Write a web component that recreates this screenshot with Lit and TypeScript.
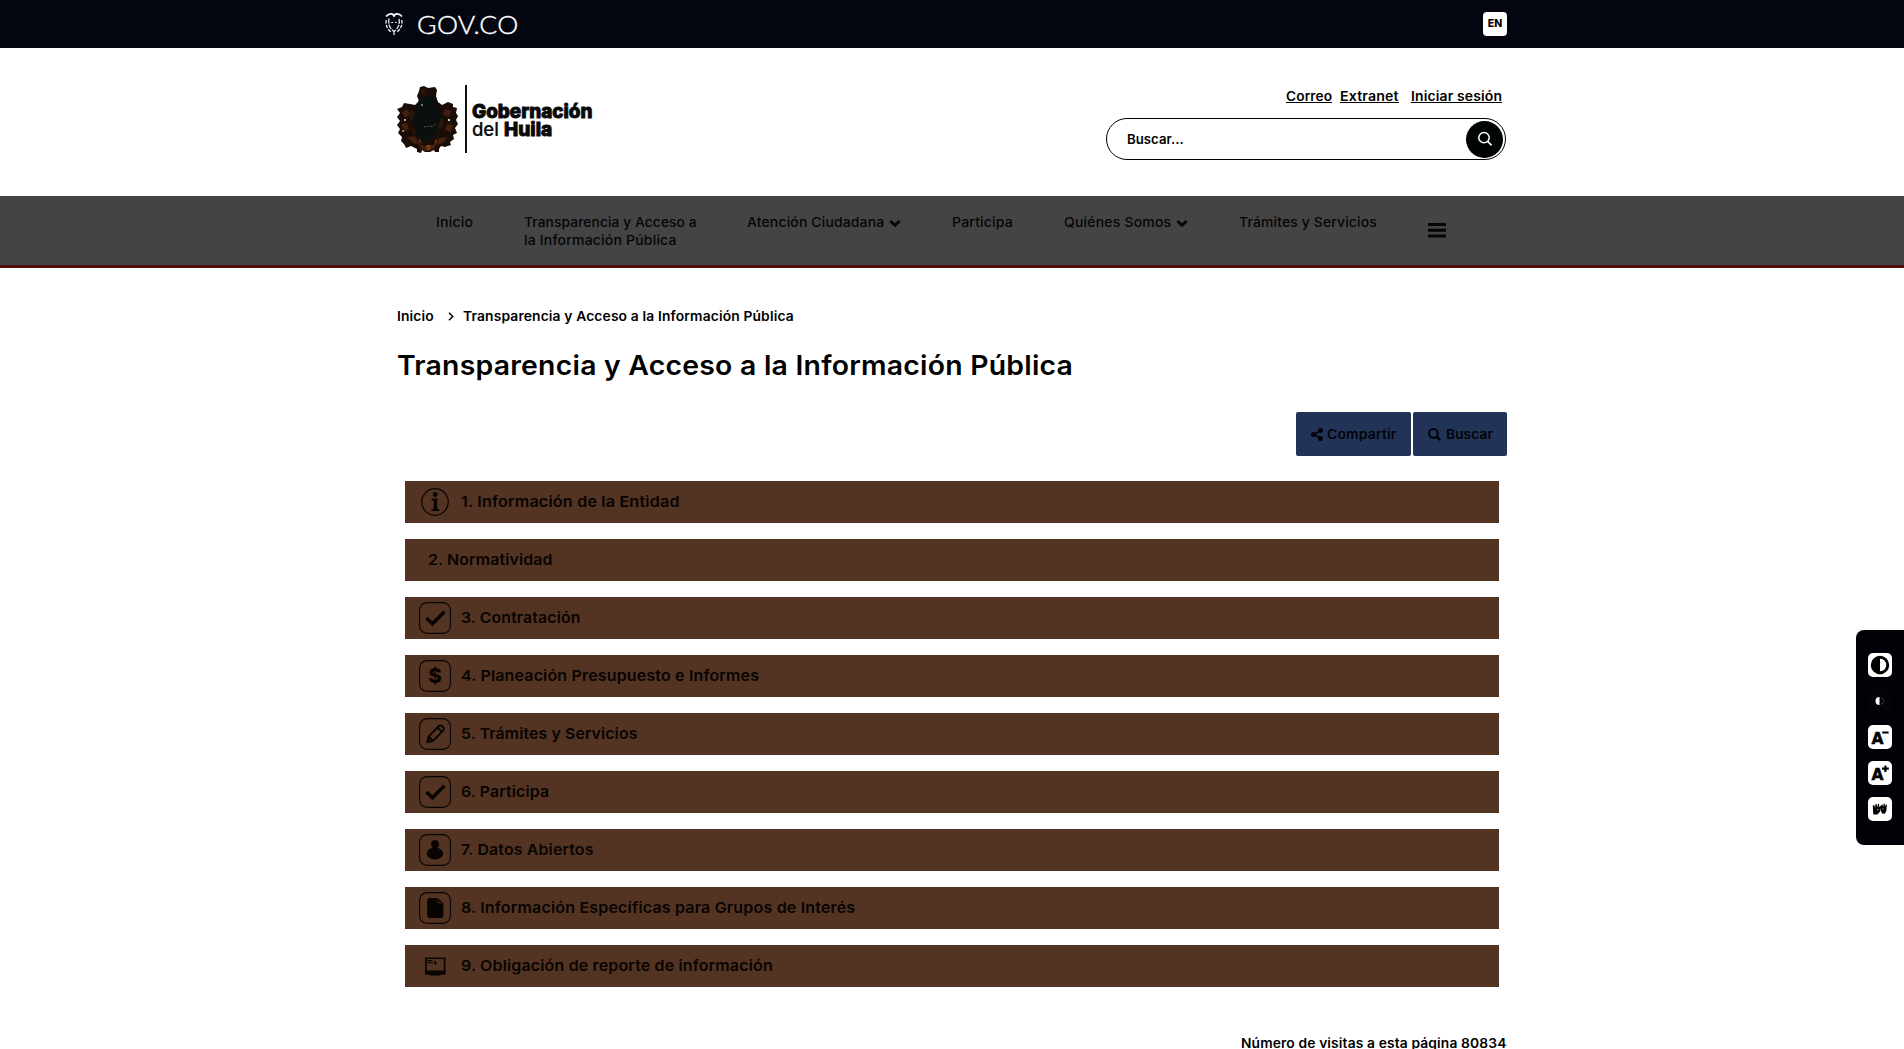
import { LitElement, html, svg, css, nothing } from "lit";
import { customElement, property } from "lit/decorators.js";

/* Single line of text, widened to a measure: mostly by glyph width, the rest by tracking. */
@customElement("fit-text")
class FitText extends LitElement {
  @property() text = "";
  @property({ type: Number }) measure = 0;

  static styles = css`
    :host { display: block; white-space: nowrap; }
    .run { display: inline-block; transform-origin: 0 50%; vertical-align: top; }
  `;

  updated() {
    const run = this.renderRoot.querySelector(".run") as HTMLElement;
    run.style.letterSpacing = "0px";
    const natural = run.offsetWidth;
    const scale = 1 + (this.measure / natural - 1) * 0.75;
    run.style.letterSpacing = `${(this.measure / scale - natural) / this.text.length}px`;
    run.style.transform = `scaleX(${scale})`;
    this.style.width = `${this.measure}px`;
  }

  render() {
    return html`<span class="run">${this.text}</span>`;
  }
}

const chevron = html`<svg class="chev" viewBox="0 0 12 9" width="12" height="9"><path d="M1.4 2 6 6.3 10.6 2" fill="none" stroke="currentColor" stroke-width="2.7" /></svg>`;

const glyphs: Record<string, unknown> = {
  info: svg`<circle cx="16" cy="16" r="13.3" fill="none" stroke="currentColor" stroke-width="1.2"/>
    <circle cx="16.2" cy="8.5" r="2.4"/><path d="M12.6 12.6h5.6v10.6h2v1.8h-7.6v-1.8h2v-8.8h-2z"/>`,
  check: svg`<path d="M7.4 16 13.4 21.8 25.4 9.8" fill="none" stroke="currentColor" stroke-width="3.4"/>`,
  dollar: svg`<text x="16" y="23.2" font-family="Inter, sans-serif" font-size="20.5" font-weight="800" text-anchor="middle">$</text>`,
  pencil: svg`<path d="M8.4 24 9.6 18.4 20 8q1.4-1.2 2.8 0l1.6 1.6q1.2 1.4 0 2.8L14 22.8zM9.6 18.4l4.4 4.4M18.6 9.6l4.2 4.2" fill="none" stroke="currentColor" stroke-width="1.8" stroke-linejoin="round"/><path d="M7.4 25 8.8 20 12.6 23.8z"/>`,
  person: svg`<circle cx="16" cy="10.2" r="4"/><rect x="14" y="12" width="4" height="4"/><ellipse cx="16" cy="19.4" rx="8.2" ry="6"/>`,
  file: svg`<path d="M10.2 6H19l5.4 5v13q0 2-2 2H10.2q-2 0-2-2V8q0-2 2-2z"/><path d="M19.2 6.4v4.4h4.8" fill="none" stroke="#53341f" stroke-width=".8"/>`,
  board: svg`<path d="M7 8.2h18.6v15.4H7z" fill="none" stroke="currentColor" stroke-width="1.6"/><path d="M6.4 20.4h20v3.8h-5v1.2H11v-1.2H6.4zM8.4 10h5v1.2h-5zM8.4 12.2h6v1h-6zM15.2 11h1.8v2.4h1v1h-2.6v-1h.4z"/>`,
};

const rows = [
  { text: "1. Información de la Entidad", w: 219, icon: "info" },
  { text: "2. Normatividad", w: 125, icon: "" },
  { text: "3. Contratación", w: 120, icon: "check", box: true },
  { text: "4. Planeación Presupuesto e Informes", w: 298, icon: "dollar", box: true },
  { text: "5. Trámites y Servicios", w: 176, icon: "pencil", box: true },
  { text: "6. Participa", w: 88.5, icon: "check", box: true },
  { text: "7. Datos Abiertos", w: 133, icon: "person", box: true },
  { text: "8. Información Específicas para Grupos de Interés", w: 394, icon: "file", box: true },
  { text: "9. Obligación de reporte de información", w: 312, icon: "board" },
];

@customElement("app-root")
class AppRoot extends LitElement {
  static styles = css`
    :host {
      display: block; position: relative; height: 1049px; overflow: hidden;
      background: #fff; color: #000; font: 600 13px/18px Inter, "Liberation Sans", sans-serif;
    }
    svg { display: block; fill: currentColor; flex: none; }
    a { color: inherit; text-decoration: none; }
    .wrap { box-sizing: border-box; width: 1110px; margin: 0 auto; }
    .gov { height: 48px; background: #03060f; color: #fff; }
    .gov .wrap { display: flex; justify-content: space-between; height: 48px; }
    .govlogo { display: flex; margin-left: -12px; gap: 14px; }
    .govlogo svg { margin-top: 12px; }
    .govname { font: 300 25px/48px Lato, sans-serif; -webkit-text-stroke: .4px #fff; }
    .en {
      width: 24px; height: 24px; margin-top: 12px; border-radius: 4px; background: #fff; color: #000;
      font-size: 10.5px; font-weight: 800; line-height: 23px; display: flex; justify-content: center;
    }
    .head { display: flex; justify-content: space-between; height: 148px; }
    .brand { display: flex; padding-top: 37px; }
    .rule { width: 2px; height: 68px; background: #111; margin: 0 5px 0 7px; }
    .brandname { font: 800 19px/18px Inter, sans-serif; padding-top: 18px; color: #0a0a0a; -webkit-text-stroke: .9px #0a0a0a; }
    .brandline { display: flex; gap: 5px; }
    .thin { font-weight: 500; -webkit-text-stroke: .2px #0a0a0a; }
    .links { display: flex; padding: 39px 5px 0 0; justify-content: flex-end; }
    .link { height: 15px; line-height: 18px; border-bottom: 1px solid #000; }
    .link.b { margin: 0 12px 0 8px; }
    .search {
      box-sizing: border-box; width: 400px; height: 42px; margin: 15px 1px 0 0; border: 1.5px solid #000; border-radius: 21px;
      display: flex; justify-content: space-between; align-items: center; padding: 0 2px 0 20px;
    }
    .go { width: 37px; height: 37px; border-radius: 50%; background: #000503; color: #fff; display: grid; place-items: center; }
    .nav { height: 69px; background: #444; border-bottom: 3px solid #4f0d0a; font-weight: 500; color: #050505; }
    .navgrid { display: grid; grid-template-columns: 88px 223px 205px 112px 175px 189px 18px; padding: 17px 0 0 39px; }
    .item { display: flex; gap: 5px; }
    .chev { margin-top: 6px; }
    .burger { margin-top: 10px; }
    .crumbs { display: flex; padding-top: 39px; height: 18px; }
    .crumbs svg { margin: 5px 9px 0 14px; }
    h1 { margin: 23px 0 0; font: 600 27px/36px Inter, sans-serif; }
    .actions { display: flex; gap: 2px; justify-content: flex-end; margin-top: 28px; }
    .btn { height: 44px; background: #213356; border-radius: 2px; display: flex; align-items: center; color: #010306; }
    .share { width: 100px; padding-left: 15px; gap: 4px; }
    .find { width: 79px; padding-left: 15px; gap: 5px; }
    .rows { display: grid; gap: 16px; padding: 25px 8px 0; }
    .row { height: 42px; background: #533322; color: #070402; display: flex; align-items: center; font-size: 15px; padding-left: 14px; }
    .row.bare { padding-left: 23px; }
    .ico { width: 32px; height: 32px; margin-right: 9.5px; }
    .visits { display: flex; justify-content: flex-end; margin-top: 47px; }
    .tools {
      position: absolute; right: 0; top: 630px; width: 36px; height: 192px; padding: 23px 0 0 12px;
      background: #000208; border-radius: 8px 0 0 8px; display: flex; flex-direction: column; gap: 12px;
    }
    .tool { width: 24px; height: 24px; border-radius: 5px; background: #fff; color: #000; }
    .tool.dark { background: #02040a; color: #fff; }
    .big { font: 700 15.5px "DejaVu Sans", sans-serif; stroke: #000; stroke-width: .5px; }
  `;

  crest() {
    return html`<svg width="61" height="68" viewBox="0 0 61 68">
      <path fill="#1a0c06" d="M22 6 23 2 27 1 31 3 38 2 40 5 39 11 41 17 45 20 51 17 56 19 56 22 60 23 59 28 61 31 59 35 61 39 58 43 60 48 56 50 57 54 53 57 54 60 48 62 44 61 42 64 42 67 38 67 37 65 33 67 28 67 25 65 24 68 20 67 20 64 14 61 9 63 7 59 4 56 5 52 1 48 3 44 0 40 3 36 0 32 3 28 0 24 5 22 7 18 13 19 18 20 22 16 20 11z"/>
      <g fill="#43200e"><path d="M5 27l5-3 3 5-5 4zM48 24l7 2-4 6-5-3zM4 39l6-1 2 6-5 3zM50 39l6 1-2 7-6-2zM10 52l8-1 4 7-5 1zM42 53l9-1-5 6-6 2zM20 57q11 9 21-1l-4 8q-7 4-13 0z"/></g>
      <g fill="#2c160c"><path d="M14 25l5 3-2 9-5-5zM43 31l4 5-2 9-5-3zM14 41l5 5-2 6zM23 7l4-4 2 8z"/></g>
      <path fill="#0a0f0f" d="M23 12l14-1 4 12 3 9-5 16-9 9-11-8-3-17z"/>
      <path fill="#7a3c12" d="M29 60l5 0-1 5h-3zM22 53l3 6-3-2zM40 53l-3 6 3-2z"/>
      <path fill="none" stroke="#52686b" stroke-width=".8" stroke-dasharray="2 1" d="M27 42l6-1 2 1 4-3"/>
      <g fill="#fff"><circle cx="8" cy="35" r=".9"/><circle cx="52" cy="35" r="1.1"/><circle cx="25" cy="20" r=".8"/><circle cx="6" cy="46" r=".8"/></g>
    </svg>`;
  }

  row(r: (typeof rows)[number]) {
    return html`<a class="row ${r.icon ? "" : "bare"}">
      ${r.icon
        ? html`<svg class="ico" viewBox="0 0 32 32">
            ${r.box ? svg`<rect x=".6" y=".6" width="30.8" height="30.8" rx="7.5" fill="none" stroke="currentColor" stroke-width="1.1"/>` : nothing}
            ${glyphs[r.icon]}
          </svg>`
        : nothing}
      <fit-text text=${r.text} measure=${r.w}></fit-text>
    </a>`;
  }

  render() {
    return html`
      <div class="gov"><div class="wrap">
        <div class="govlogo">
          <svg width="18" height="25" viewBox="0 0 18 25">
            <g fill="none" stroke="#fff" stroke-width="1.2">
              <path d="M1 4.5Q4 1 7.5 2L9 4 10.5 2Q14 1 17 4.5" stroke-width="1.7"/>
              <path d="M4 6.5Q2.5 15 9 19.5 15.5 15 14 6.5" stroke-dasharray="5 1"/>
              <path d="M1.2 8Q0 15 6 20M16.8 8Q18 15 12 20" stroke-dasharray="3.5 1.3"/>
              <path d="M6.3 10.5H8M10 10.5h1.7M9 19v4" />
            </g>
          </svg>
          <fit-text class="govname" text="GOV.CO" measure="102"></fit-text>
        </div>
        <div class="en">EN</div>
      </div></div>

      <div class="wrap head">
        <div class="brand">
          ${this.crest()}
          <div class="rule"></div>
          <div class="brandname">
            <fit-text text="Gobernación" measure="120"></fit-text>
            <div class="brandline"><fit-text class="thin" text="del" measure="27"></fit-text><fit-text text="Huila" measure="48"></fit-text></div>
          </div>
        </div>
        <div>
          <div class="links">
            <a class="link"><fit-text text="Correo" measure="46"></fit-text></a>
            <a class="link b"><fit-text text="Extranet" measure="59"></fit-text></a>
            <a class="link"><fit-text text="Iniciar sesión" measure="91"></fit-text></a>
          </div>
          <div class="search">
            <fit-text text="Buscar..." measure="57"></fit-text>
            <div class="go"><svg width="16" height="16" viewBox="0 0 16 16"><g fill="none" stroke="#fff" stroke-width="1.5"><circle cx="7" cy="6.6" r="5.2"/><path d="M10.6 10.4 14.6 14.4"/></g></svg></div>
          </div>
        </div>
      </div>

      <div class="nav"><div class="wrap navgrid">
        <a class="item"><fit-text text="Inicio" measure="37"></fit-text></a>
        <a><fit-text text="Transparencia y Acceso a" measure="173"></fit-text><fit-text text="la Información Pública" measure="153"></fit-text></a>
        <a class="item"><fit-text text="Atención Ciudadana" measure="137"></fit-text>${chevron}</a>
        <a class="item"><fit-text text="Participa" measure="61"></fit-text></a>
        <a class="item"><fit-text text="Quiénes Somos" measure="107"></fit-text>${chevron}</a>
        <a class="item"><fit-text text="Trámites y Servicios" measure="138"></fit-text></a>
        <svg class="burger" width="18" height="15" viewBox="0 0 18 15"><path d="M0 0h18v3H0zM0 5.7h18v3H0zM0 11.4h18v3H0z"/></svg>
      </div></div>

      <div class="wrap">
        <div class="crumbs">
          <fit-text text="Inicio" measure="37"></fit-text>
          <svg width="6" height="9" viewBox="0 0 6 9"><path d="M1 .8 4.7 4.5 1 8.2" fill="none" stroke="#000" stroke-width="1.5"/></svg>
          <fit-text text="Transparencia y Acceso a la Información Pública" measure="331"></fit-text>
        </div>
        <h1><fit-text text="Transparencia y Acceso a la Información Pública" measure="676"></fit-text></h1>
        <div class="actions">
          <a class="btn share">
            <svg width="12" height="13" viewBox="0 0 12 13"><path d="M3 6.5 9.5 2.7M3 6.5 9.5 10.3" stroke="currentColor" stroke-width="1.6"/><circle cx="2.6" cy="6.5" r="2.5"/><circle cx="9.5" cy="2.6" r="2.5"/><circle cx="9.5" cy="10.4" r="2.5"/></svg>
            <fit-text text="Compartir" measure="69"></fit-text>
          </a>
          <a class="btn find">
            <svg width="13" height="13" viewBox="0 0 13 13"><g fill="none" stroke="currentColor"><circle cx="5.4" cy="5.4" r="4.3" stroke-width="2"/><path d="M8.5 8.5 12 12" stroke-width="2.5"/></g></svg>
            <fit-text text="Buscar" measure="47"></fit-text>
          </a>
        </div>
        <div class="rows">${rows.map((r) => this.row(r))}</div>
        <div class="visits"><fit-text text="Número de visitas a esta página 80834" measure="266"></fit-text></div>
      </div>

      <div class="tools">
        <svg class="tool" viewBox="0 0 24 24"><circle cx="12" cy="12" r="7.7" fill="none" stroke="#000" stroke-width="3"/><path d="M12 6a6 6 0 0 1 0 12z" fill="#fff"/><path d="M12 5a7 7 0 0 0 0 14z"/></svg>
        <svg class="tool dark" viewBox="0 0 24 24"><path d="M11.5 8a4 4 0 0 0 0 8z"/><path d="M13 8.5a3.6 3.6 0 0 1 0 7" fill="none" stroke="#444" stroke-width=".8"/></svg>
        <svg class="tool" viewBox="0 0 24 24"><text class="big" x="3.4" y="18.6">A</text><path d="M14.2 6.4h6.4v2.2h-6.4z"/></svg>
        <svg class="tool" viewBox="0 0 24 24"><text class="big" x="3.4" y="18.6">A</text><path d="M14 6.6h6.8v2.2H14zM16.3 4.4h2.2V11h-2.2z"/></svg>
        <svg class="tool" viewBox="0 0 24 24"><path d="M4.8 8.4 6 8l1.2 2.4L7.4 7l1.2 0 .6 3 1-3.2 1 .2-.2 3 1.4-1.2.8.6-1.4 5.6-2.4 2.4-4 .2L5 14z"/><path d="M12.8 9.4l1-2 1 .4.2 2.2L15.8 6.6l1 .2v3L18 7.4l.9.4-.6 6.4-1.6 2.6-2.6-.4-1.6-3.4z"/><path d="M9 12.6h1.4M14.4 12h1.2" stroke="#fff" stroke-width=".7"/></svg>
      </div>
    `;
  }
}
